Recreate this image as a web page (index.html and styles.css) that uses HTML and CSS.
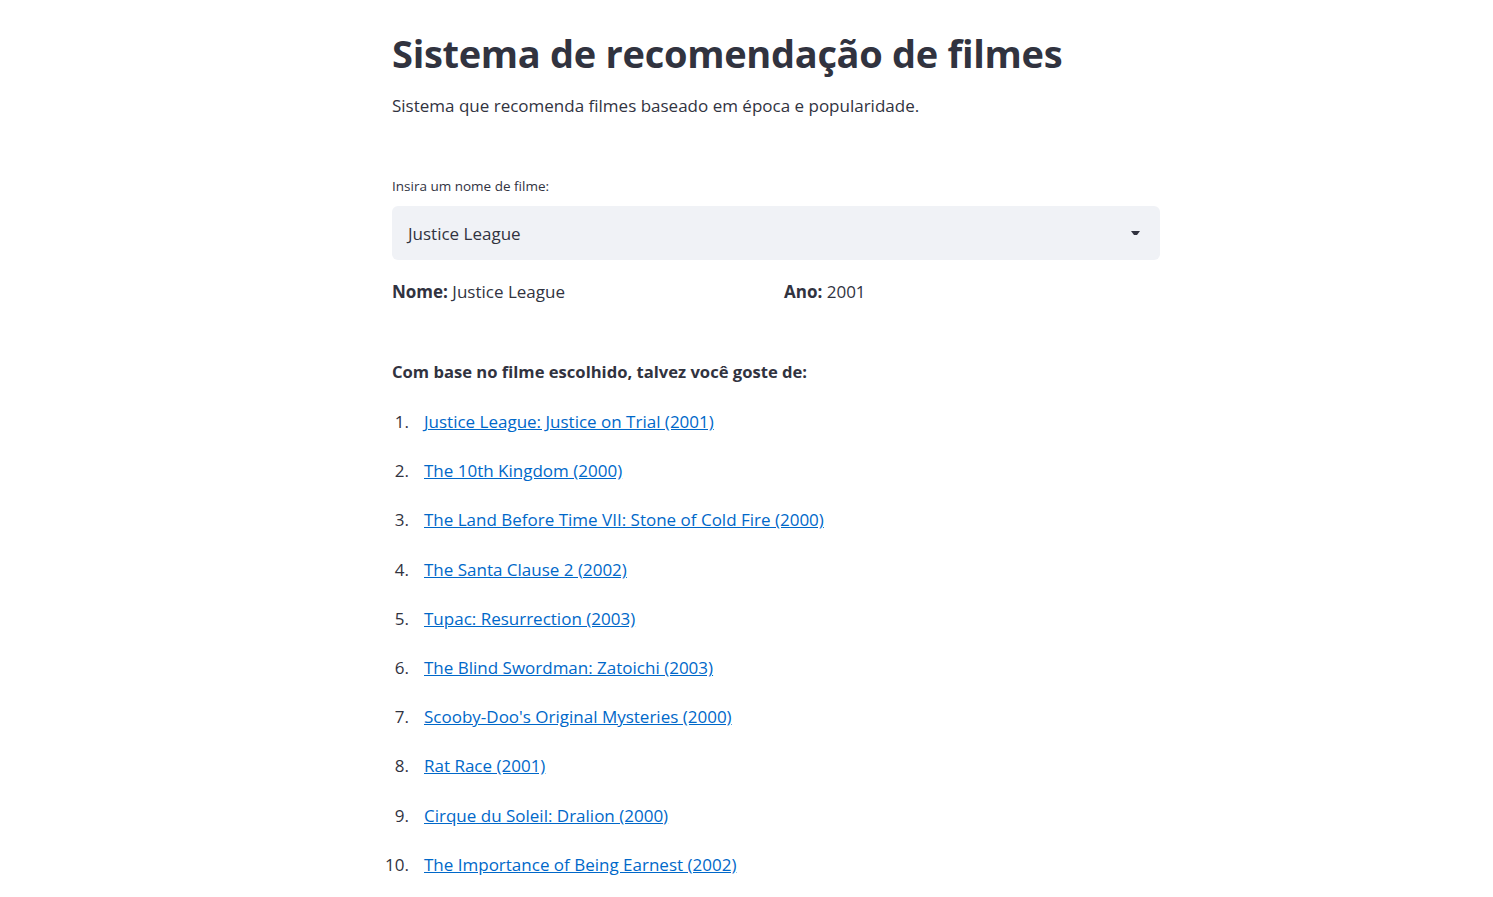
FILE: index.html
```html
<!DOCTYPE html>
<html lang="pt">
<head>
<meta charset="utf-8">
<title>Sistema de recomendação de filmes</title>
<link rel="stylesheet" href="styles.css">
</head>
<body>
<main class="main">
  <h1 class="title">Sistema de recomendação de filmes</h1>
  <p class="subtitle">Sistema que recomenda filmes baseado em época e popularidade.</p>

  <label class="field-label">Insira um nome de filme:</label>
  <div class="select">
    <span class="select-value">Justice League</span>
    <svg class="select-arrow" width="9" height="5" viewBox="0 0 9 5"><path d="M0 0 H9 L6 4 H3 Z" fill="#31333f"/></svg>
  </div>

  <div class="columns">
    <div class="col"><b>Nome:</b> Justice League</div>
    <div class="col"><b>Ano:</b> 2001</div>
  </div>

  <p class="rec-title">Com base no filme escolhido, talvez você goste de:</p>

  <ol class="rec-list">
    <li><a href="#">Justice League: Justice on Trial (2001)</a></li>
    <li><a href="#">The 10th Kingdom (2000)</a></li>
    <li><a href="#">The Land Before Time VII: Stone of Cold Fire (2000)</a></li>
    <li><a href="#">The Santa Clause 2 (2002)</a></li>
    <li><a href="#">Tupac: Resurrection (2003)</a></li>
    <li><a href="#">The Blind Swordman: Zatoichi (2003)</a></li>
    <li><a href="#">Scooby-Doo's Original Mysteries (2000)</a></li>
    <li><a href="#">Rat Race (2001)</a></li>
    <li><a href="#">Cirque du Soleil: Dralion (2000)</a></li>
    <li><a href="#">The Importance of Being Earnest (2002)</a></li>
  </ol>
</main>
</body>
</html>
```

FILE: styles.css
```css
html, body {
  margin: 0;
  padding: 0;
  background: #ffffff;
}
body {
  font-family: "Open Sans", "Noto Sans", sans-serif;
  color: #31333f;
  font-size: 17px;
}
.main {
  margin-left: 392px;
  width: 768px;
  padding-top: 28px;
}
.title {
  font-size: 38px;
  font-weight: 700;
  line-height: 50px;
  margin: 0;
  letter-spacing: -0.3px;
}
.subtitle {
  margin: 15px 0 0 0;
  line-height: 26px;
}
.field-label {
  display: block;
  margin-top: 57px;
  font-size: 13.5px;
  line-height: 20px;
}
.select {
  margin-top: 10px;
  height: 54px;
  background: #f0f2f6;
  border-radius: 6px;
  display: flex;
  align-items: center;
  justify-content: space-between;
  padding: 0 20px 0 16px;
}
.select-arrow {
  display: block;
}
.columns {
  display: grid;
  grid-template-columns: 1fr 1fr;
  gap: 16px;
  margin-top: 19px;
  line-height: 26px;
}
.col b { font-weight: 700; }
.rec-title {
  font-weight: 700;
  font-size: 16.6px;
  margin: 54px 0 0 0;
  line-height: 26px;
}
.rec-list {
  margin: 24px 0 0 0;
  padding-left: 32px;
  list-style: none;
  counter-reset: item;
}
.rec-list li {
  line-height: 26px;
  margin-bottom: 23.2px;
  counter-increment: item;
}
.rec-list li::before {
  content: counter(item) ".";
  display: inline-block;
  box-sizing: border-box;
  width: 48px;
  margin-left: -48px;
  padding-right: 15px;
  text-align: right;
  color: #31333f;
}
.rec-list a {
  color: #0068c9;
  text-decoration: underline;
}
```
